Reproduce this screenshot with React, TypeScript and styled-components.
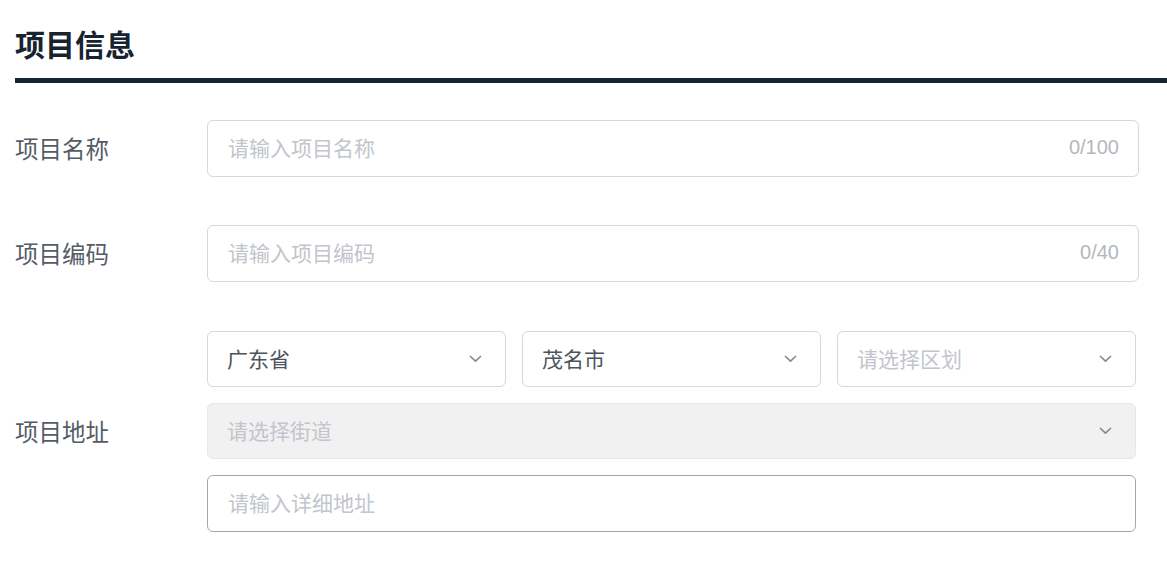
import styled, { createGlobalStyle } from 'styled-components';

const GlobalStyle = createGlobalStyle`
  body {
    margin: 0;
    background: #ffffff;
    font-family: "Noto Sans CJK SC", "Noto Sans", "Liberation Sans", sans-serif;
  }
`;

const Chevron = () => (
  <svg width="13" height="8" viewBox="0 0 13 8" fill="none">
    <path d="M1.5 1.5 L6.5 6.2 L11.5 1.5" stroke="#858a94" strokeWidth="1.7" strokeLinecap="round" strokeLinejoin="round" />
  </svg>
);

const App = () => {
  return (
    <Page>
      <GlobalStyle />
      <Title>项目信息</Title>
      <Form>
        <Row>
          <Label>项目名称</Label>
          <InputBox>
            <Placeholder>请输入项目名称</Placeholder>
            <Counter>0/100</Counter>
          </InputBox>
        </Row>
        <Row>
          <Label>项目编码</Label>
          <InputBox>
            <Placeholder>请输入项目编码</Placeholder>
            <Counter>0/40</Counter>
          </InputBox>
        </Row>
        <Row spaced>
          <Label>项目地址</Label>
          <AddressGroup>
            <SelectRow>
              <SelectBox>
                <Value>广东省</Value>
                <Chevron />
              </SelectBox>
              <SelectBox>
                <Value>茂名市</Value>
                <Chevron />
              </SelectBox>
              <SelectBox>
                <Placeholder>请选择区划</Placeholder>
                <Chevron />
              </SelectBox>
            </SelectRow>
            <SelectBox disabled>
              <Placeholder>请选择街道</Placeholder>
              <Chevron />
            </SelectBox>
            <InputBox active>
              <Placeholder>请输入详细地址</Placeholder>
            </InputBox>
          </AddressGroup>
        </Row>
      </Form>
    </Page>
  );
};

export default App;

const Page = styled.div`
  padding-left: 15px;
  width: 1152px;
`;

const Title = styled.h2`
  margin: 0;
  padding: 25px 0 17px;
  font-size: 30px;
  line-height: 36px;
  font-weight: 700;
  color: #172330;
  border-bottom: 5px solid #172330;
`;

const Form = styled.div`
  display: flex;
  flex-direction: column;
  gap: 48px;
  padding-top: 37px;
  width: 1124px;
`;

const Row = styled.div<{ spaced?: boolean }>`
  display: grid;
  grid-template-columns: 192px 1fr;
  align-items: center;
  margin-top: ${(p) => (p.spaced ? '1px' : '0')};
`;

const Label = styled.div`
  font-size: 23.5px;
  color: #555c66;
  line-height: 1;
`;

const InputBox = styled.div<{ active?: boolean }>`
  box-sizing: border-box;
  height: 57px;
  display: flex;
  align-items: center;
  justify-content: space-between;
  padding: 0 19px 2px 20px;
  border: 1px solid ${(p) => (p.active ? '#a3a6ad' : '#d6d8dd')};
  border-radius: 6px;
  background: #ffffff;
`;

const AddressGroup = styled.div`
  display: flex;
  flex-direction: column;
  gap: 16px;
  width: 929px;
`;

const SelectRow = styled.div`
  display: grid;
  grid-template-columns: repeat(3, 1fr);
  gap: 16px;
`;

const SelectBox = styled.div<{ disabled?: boolean }>`
  box-sizing: border-box;
  height: 56px;
  display: flex;
  align-items: center;
  justify-content: space-between;
  padding: 0 23px 1px 19px;
  border: 1px solid ${(p) => (p.disabled ? '#e6e7ea' : '#d6d8dd')};
  border-radius: 6px;
  background: ${(p) => (p.disabled ? '#f1f1f2' : '#ffffff')};
`;

const Placeholder = styled.span`
  font-size: 21px;
  line-height: 1;
  color: #c2c5cc;
`;

const Value = styled.span`
  font-size: 21px;
  line-height: 1;
  color: #4d535c;
`;

const Counter = styled.span`
  font-family: "Liberation Sans", "Noto Sans", sans-serif;
  font-size: 20px;
  color: #b4b7bd;
`;
